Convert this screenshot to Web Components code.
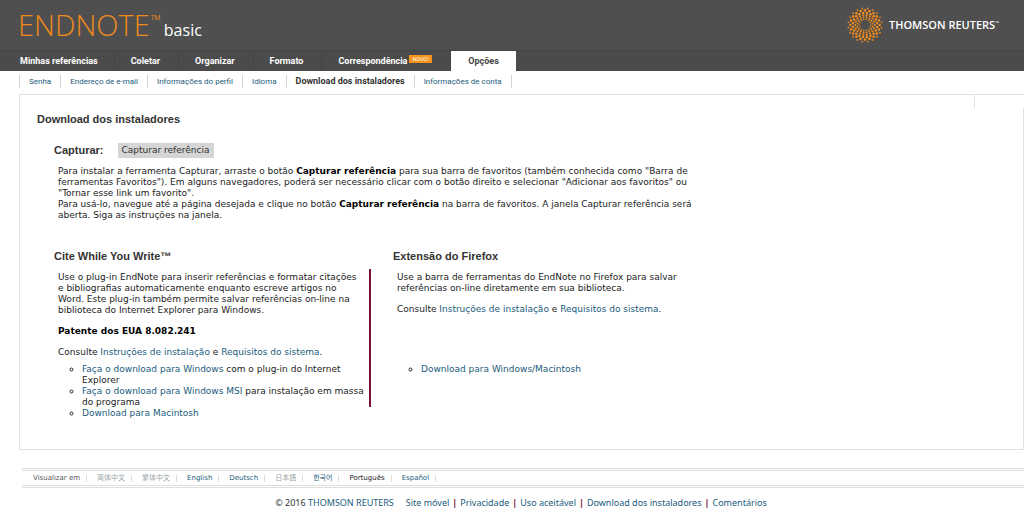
<!DOCTYPE html>
<html lang="pt">
<head>
<meta charset="utf-8">
<title>EndNote basic - Download dos instaladores</title>
<style>
  body { margin: 0; background: #fff; }
</style>
</head>
<body>
<endnote-page></endnote-page>

<script>
const define = (name, html, setup) => {
  const template = document.createElement('template');
  template.innerHTML = html;
  customElements.define(name, class extends HTMLElement {
    constructor() {
      super();
      this.attachShadow({ mode: 'open' }).append(template.content.cloneNode(true));
    }
    connectedCallback() {
      if (setup) setup(this, this.shadowRoot);
    }
  });
};

/* Dotted sunburst: rings of dots, each ring turned a little against the last */
define('sun-mark', `
  <style>
    :host { display: block; width: 36px; height: 36px; }
    svg { display: block; width: 100%; height: 100%; }
  </style>
  <svg viewBox="-18 -18 36 36" fill="#f08a1c" aria-hidden="true"></svg>
`, (host, root) => {
  const rings = [[5.6, 14, .75], [7.6, 16, .95], [9.8, 18, 1.1], [12.2, 20, 1.25], [14.6, 20, 1.3], [16.8, 20, .9]];
  let dots = '';
  rings.forEach(([r, n, size], k) => {
    for (let i = 0; i < n; i++) {
      const a = ((i + k / 2) / n) * Math.PI * 2;
      dots += `<circle cx="${(r * Math.cos(a)).toFixed(2)}" cy="${(r * Math.sin(a)).toFixed(2)}" r="${size}"/>`;
    }
  });
  root.querySelector('svg').innerHTML = dots;
});

define('site-header', `
  <style>
    :host { display: flex; justify-content: space-between; align-items: center; height: 50px;
      padding: 0 25px 0 18px; background: #4f4f4f; box-sizing: border-box; }
    .product { display: flex; align-items: baseline; color: #fff; text-decoration: none;
      font: 16px/24px "Open Sans", sans-serif; }
    .name { color: #f08a1c; font-size: 29px; font-weight: 300; line-height: 46px; }
    sup { align-self: flex-start; color: #f08a1c; font-size: 14px; line-height: 36px; font-weight: 300; margin: 0 3px 0 1px; }
    .company { display: flex; align-items: center; gap: 6px; color: #fff; text-decoration: none;
      font: 600 11px/16px "Open Sans", sans-serif; }
    small { font-size: 5px; vertical-align: 4px; line-height: 1; }
  </style>
  <a class="product" href="#"><span class="name">ENDNOTE</span><sup>™</sup><span class="basic">basic</span></a>
  <a class="company" href="#"><sun-mark></sun-mark><span>THOMSON REUTERS<small>™</small></span></a>
`);

define('nav-tab', `
  <style>
    :host { display: block; border-right: 1px solid #454545; }
    :host([active]) { border: 0; }
    a { display: flex; gap: 2px; height: 20px; padding: 0 18px 0 16px; color: #fff;
      font: bold 9px/21px Roboto, "Liberation Sans", sans-serif; text-decoration: none; }
    :host([first]) a { padding: 0 16px 0 20px; }
    :host([active]) a { background: #fff; color: #444; padding: 0 17px; }
    ::slotted(mark) { align-self: flex-start; margin-top: 4px; padding: 0 3px; background: #f7941d; color: #fff;
      font: 5px/8px "DejaVu Sans", sans-serif; }
  </style>
  <a href="#"><slot></slot><slot name="badge"></slot></a>
`);

define('main-nav', `
  <style>
    :host { display: block; background: #4b4b4b; border-top: 1px solid #444; }
    nav { display: flex; }
  </style>
  <nav><slot></slot></nav>
`);

define('sub-item', `
  <style>
    :host { display: block; border-right: 1px solid #d4d4d4; padding: 0 9px 0 9px; font: 8px/13px Roboto, "Liberation Sans", sans-serif; }
    :host([active]) { font-weight: bold; font-size: 9px; }
    a { color: #1b5c7c; text-decoration: none; }
    :host([active]) a { color: #333; }
  </style>
  <a href="#"><slot></slot></a>
`);

define('sub-nav', `
  <style>
    :host { display: block; padding: 4px 0 6px 19px; }
    nav { display: flex; border-left: 1px solid #d4d4d4; }
  </style>
  <nav><slot></slot></nav>
`);

define('installer-section', `
  <style>
    :host { display: block; color: #222; font: 9px/11px "DejaVu Sans", sans-serif; }
    header { display: flex; align-items: center; gap: 14px; }
    h2 { margin: 0; color: #333; font: bold 11px/16px "Liberation Sans", sans-serif; }
    .body { padding: 0 0 0 4px; }
    ::slotted(button) { height: 15px; padding: 0 4px; border: 0; background: #d5d5d5; color: #333;
      font: 9px/15px "DejaVu Sans", sans-serif; }
  </style>
  <header><h2><slot name="title"></slot></h2><slot name="action"></slot></header>
  <div class="body"><slot></slot></div>
`);

define('installers-panel', `
  <style>
    :host { display: block; margin-left: 19px; border: 1px solid #e2e2e2; padding: 0 17px 30px; }
    .corner { display: flex; justify-content: flex-end; height: 13px; margin-right: -18px; }
    .corner i { width: 49px; border-left: 1px solid #e2e2e2; background: #fff; }
    h1 { margin: 3px 0 15px; color: #333; font: bold 11px/16px "Liberation Sans", sans-serif; }
    .content { max-width: 646px; padding-left: 17px; }
    .columns { display: grid; grid-template-columns: minmax(0, 339fr) minmax(0, 307fr); margin-top: 27px; }
    p { margin: 0 0 10px; }
    installer-section p:first-of-type { margin-top: 8px; }
    .capture p { margin: 0; }
    .write p { max-width: 303px; }
    .write ul { max-width: 309px; }
    .write { background: linear-gradient(#7d1238, #7d1238) 315px 21px / 2px 138px no-repeat; }
    b { color: #000; }
    a { color: #1b5c7c; text-decoration: none; }
    ul { box-sizing: border-box; margin: -4px 0 0; padding: 0 0 0 24px; list-style: circle; }
    .firefox ul { margin-top: 49px; }
  </style>
  <div class="corner"><i></i></div>
  <h1>Download dos instaladores</h1>
  <div class="content">
    <installer-section class="capture">
      <span slot="title">Capturar:</span>
      <button slot="action" type="button">Capturar referência</button>
      <p>Para instalar a ferramenta Capturar, arraste o botão <b>Capturar referência</b> para sua barra de favoritos (também conhecida como "Barra de ferramentas Favoritos"). Em alguns navegadores, poderá ser necessário clicar com o botão direito e selecionar "Adicionar aos favoritos" ou "Tornar esse link um favorito".</p>
      <p>Para usá-lo, navegue até a página desejada e clique no botão <b>Capturar referência</b> na barra de favoritos. A janela Capturar referência será aberta. Siga as instruções na janela.</p>
    </installer-section>
    <div class="columns">
      <installer-section class="write">
        <span slot="title">Cite While You Write™</span>
        <p>Use o plug-in EndNote para inserir referências e formatar citações e bibliografias automaticamente enquanto escreve artigos no Word. Este plug-in também permite salvar referências on-line na biblioteca do Internet Explorer para Windows.</p>
        <p><b>Patente dos EUA 8.082.241</b></p>
        <p>Consulte <a href="#">Instruções de instalação</a> e <a href="#">Requisitos do sistema</a>.</p>
        <ul>
          <li><a href="#">Faça o download para Windows</a> com o plug-in do Internet Explorer</li>
          <li><a href="#">Faça o download para Windows MSI</a> para instalação em massa do programa</li>
          <li><a href="#">Download para Macintosh</a></li>
        </ul>
      </installer-section>
      <installer-section class="firefox">
        <span slot="title">Extensão do Firefox</span>
        <p>Use a barra de ferramentas do EndNote no Firefox para salvar referências on-line diretamente em sua biblioteca.</p>
        <p>Consulte <a href="#">Instruções de instalação</a> e <a href="#">Requisitos do sistema</a>.</p>
        <ul>
          <li><a href="#">Download para Windows/Macintosh</a></li>
        </ul>
      </installer-section>
    </div>
  </div>
`);

define('language-bar', `
  <style>
    :host { display: block; margin: 18px 0 0 22px; border: 3px double #dedede; border-width: 3px 0; }
    ul { display: flex; margin: 0; padding: 1px 0 1px 3px; list-style: none; font: 7px/12px "DejaVu Sans", "Noto Sans CJK SC", sans-serif; }
    li { display: flex; align-items: center; padding-left: 8px; color: #555; }
    li::after { content: ""; height: 7px; margin-left: 6px; border-right: 1px solid #ddd; }
    li + li { padding-left: 10px; }
    a { color: #1b5c7c; text-decoration: none; }
    .faint { color: #9aa5a8; }
    .current { color: #222; }
  </style>
  <ul>
    <li>Visualizar em</li>
    <li><a class="faint" href="#" lang="zh-Hans">简体中文</a></li>
    <li><a class="faint" href="#" lang="zh-Hant">繁体中文</a></li>
    <li><a href="#">English</a></li>
    <li><a href="#">Deutsch</a></li>
    <li><a class="faint" href="#" lang="ja">日本語</a></li>
    <li><a href="#" lang="ko">한국어</a></li>
    <li class="current">Português</li>
    <li><a href="#">Español</a></li>
  </ul>
`);

define('site-footer', `
  <style>
    :host { display: flex; justify-content: center; padding: 8px 0 0 18px; color: #333;
      font: 9px/14px "Noto Sans", "DejaVu Sans", sans-serif; }
    a { color: #1b5c7c; text-decoration: none; }
    a + a::before { content: "|"; margin: 0 3px; color: #7d1238; font-weight: bold; }
    nav { margin-left: 12px; }
  </style>
  <span>© 2016 <a href="#">THOMSON REUTERS</a></span>
  <nav><a href="#">Site móvel</a><a href="#">Privacidade</a><a href="#">Uso aceitável</a><a href="#">Download dos instaladores</a><a href="#">Comentários</a></nav>
`);

define('endnote-page', `
  <style>:host { display: block; }</style>
  <site-header></site-header>
  <main-nav>
    <nav-tab first>Minhas referências</nav-tab>
    <nav-tab>Coletar</nav-tab>
    <nav-tab>Organizar</nav-tab>
    <nav-tab>Formato</nav-tab>
    <nav-tab>Correspondência<mark slot="badge">NOVO!</mark></nav-tab>
    <nav-tab active>Opções</nav-tab>
  </main-nav>
  <sub-nav>
    <sub-item>Senha</sub-item>
    <sub-item>Endereço de e-mail</sub-item>
    <sub-item>Informações do perfil</sub-item>
    <sub-item>Idioma</sub-item>
    <sub-item active>Download dos instaladores</sub-item>
    <sub-item>Informações de conta</sub-item>
  </sub-nav>
  <main><installers-panel></installers-panel></main>
  <language-bar></language-bar>
  <site-footer></site-footer>
`);
</script>
</body>
</html>
